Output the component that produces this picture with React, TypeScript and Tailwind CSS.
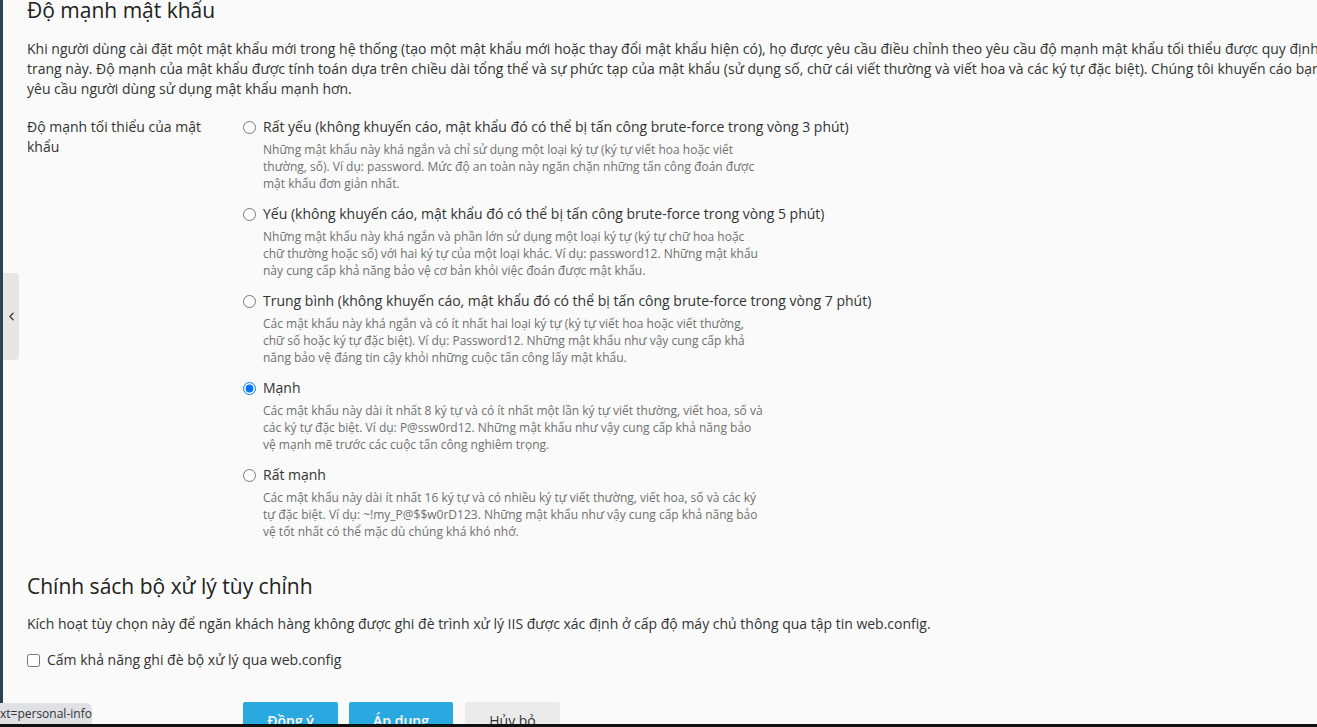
import React from 'react';
import { ChevronLeft } from 'lucide-react';

type Option = {
  label: string;
  lines: string[];
  checked?: boolean;
};

const options: Option[] = [
  {
    label: 'Rất yếu (không khuyến cáo, mật khẩu đó có thể bị tấn công brute-force trong vòng 3 phút)',
    lines: [
      'Những mật khẩu này khá ngắn và chỉ sử dụng một loại ký tự (ký tự viết hoa hoặc viết',
      'thường, số). Ví dụ: password. Mức độ an toàn này ngăn chặn những tấn công đoán được',
      'mật khẩu đơn giản nhất.',
    ],
  },
  {
    label: 'Yếu (không khuyến cáo, mật khẩu đó có thể bị tấn công brute-force trong vòng 5 phút)',
    lines: [
      'Những mật khẩu này khá ngắn và phần lớn sử dụng một loại ký tự (ký tự chữ hoa hoặc',
      'chữ thường hoặc số) với hai ký tự của một loại khác. Ví dụ: password12. Những mật khẩu',
      'này cung cấp khả năng bảo vệ cơ bản khỏi việc đoán được mật khẩu.',
    ],
  },
  {
    label: 'Trung bình (không khuyến cáo, mật khẩu đó có thể bị tấn công brute-force trong vòng 7 phút)',
    lines: [
      'Các mật khẩu này khá ngắn và có ít nhất hai loại ký tự (ký tự viết hoa hoặc viết thường,',
      'chữ số hoặc ký tự đặc biệt). Ví dụ: Password12. Những mật khẩu như vậy cung cấp khả',
      'năng bảo vệ đáng tin cậy khỏi những cuộc tấn công lấy mật khẩu.',
    ],
  },
  {
    label: 'Mạnh',
    checked: true,
    lines: [
      'Các mật khẩu này dài ít nhất 8 ký tự và có ít nhất một lần ký tự viết thường, viết hoa, số và',
      'các ký tự đặc biệt. Ví dụ: P@ssw0rd12. Những mật khẩu như vậy cung cấp khả năng bảo',
      'vệ mạnh mẽ trước các cuộc tấn công nghiêm trọng.',
    ],
  },
  {
    label: 'Rất mạnh',
    lines: [
      'Các mật khẩu này dài ít nhất 16 ký tự và có nhiều ký tự viết thường, viết hoa, số và các ký',
      'tự đặc biệt. Ví dụ: ~!my_P@$$w0rD123. Những mật khẩu như vậy cung cấp khả năng bảo',
      'vệ tốt nhất có thể mặc dù chúng khá khó nhớ.',
    ],
  },
];

const App: React.FC = () => {
  return (
    <div
      className="relative flex h-[727px] w-[1317px] flex-col overflow-hidden bg-[#fafafa] text-[#333]"
      style={{ fontFamily: '"Open Sans", "Noto Sans", sans-serif' }}
    >
      <div className="flex min-h-0 flex-1">
        {/* sidebar edge */}
        <div className="w-[3px] shrink-0 bg-[#2f4254]" />

        <div className="min-w-0 flex-1 overflow-hidden pl-[24px]">
          <h2 className="-mt-[4px] text-[21px] leading-[28px] font-normal text-[#212121] whitespace-nowrap">
            Độ mạnh mật khẩu
          </h2>

          <p className="mt-[15px] text-[14px] leading-[20px] whitespace-nowrap">
            <span className="block">
              Khi người dùng cài đặt một mật khẩu mới trong hệ thống (tạo một mật khẩu mới hoặc thay đổi mật khẩu hiện có), họ được yêu cầu điều chỉnh theo yêu cầu độ mạnh mật khẩu tối thiểu được quy định trên
            </span>
            <span className="block">
              trang này. Độ mạnh của mật khẩu được tính toán dựa trên chiều dài tổng thể và sự phức tạp của mật khẩu (sử dụng số, chữ cái viết thường và viết hoa và các ký tự đặc biệt). Chúng tôi khuyến cáo bạn
            </span>
            <span className="block">yêu cầu người dùng sử dụng mật khẩu mạnh hơn.</span>
          </p>

          <div className="mt-[18px] flex">
            <div className="w-[216px] shrink-0 pr-3 text-[14px] leading-[20px]">
              Độ mạnh tối thiểu của mật khẩu
            </div>
            <div className="flex flex-col">
              {options.map((o) => (
                <div key={o.label} className="mb-[12px]">
                  <label className="flex items-center gap-[7px] text-[14px] leading-[20px] whitespace-nowrap">
                    <input
                      type="radio"
                      name="strength"
                      defaultChecked={o.checked}
                      className="m-0 h-[13px] w-[13px]"
                    />
                    {o.label}
                  </label>
                  <div className="mt-[4px] pl-[20px] text-[12px] leading-[17px] text-[#707070] whitespace-nowrap">
                    {o.lines.map((l) => (
                      <span key={l} className="block">
                        {l}
                      </span>
                    ))}
                  </div>
                </div>
              ))}
            </div>
          </div>

          <h2 className="mt-[20px] text-[21px] leading-[28px] font-normal text-[#212121] whitespace-nowrap">
            Chính sách bộ xử lý tùy chỉnh
          </h2>
          <p className="mt-[14px] text-[14px] leading-[20px] whitespace-nowrap">
            Kích hoạt tùy chọn này để ngăn khách hàng không được ghi đè trình xử lý IIS được xác định ở cấp độ máy chủ thông qua tập tin web.config.
          </p>
          <label className="mt-[16px] flex items-center gap-[7px] text-[14px] leading-[20px]">
            <input type="checkbox" className="m-0 h-[13px] w-[13px]" />
            Cấm khả năng ghi đè bộ xử lý qua web.config
          </label>

          <div className="mt-[32px] flex gap-[11px] pl-[216px]">
            <button className="h-[36px] w-[95px] rounded-[2px] bg-[#29a9df] text-[14px] font-semibold text-white">
              Đồng ý
            </button>
            <button className="h-[36px] w-[104px] rounded-[2px] bg-[#29a9df] text-[14px] font-semibold text-white">
              Áp dụng
            </button>
            <button className="ml-[1px] h-[36px] w-[95px] rounded-[2px] bg-[#ebebeb] text-[14px] text-[#333]">
              Hủy bỏ
            </button>
          </div>
        </div>
      </div>

      <div className="h-[3px] shrink-0 bg-[#111]" />

      {/* collapse tab */}
      <div className="absolute left-[3px] top-[273px] flex h-[87px] w-[16px] items-center justify-center rounded-r-[4px] bg-[#e6e6e6] text-[#333]">
        <ChevronLeft size={13} strokeWidth={2.25} />
      </div>

      {/* status bubble */}
      <div className="absolute bottom-[3px] left-0 flex h-[21px] w-[92px] items-center overflow-hidden rounded-tr-[6px] bg-[#dfe1e5] text-[12px] text-[#333] whitespace-nowrap">
        xt=personal-info
      </div>
    </div>
  );
};

export default App;
